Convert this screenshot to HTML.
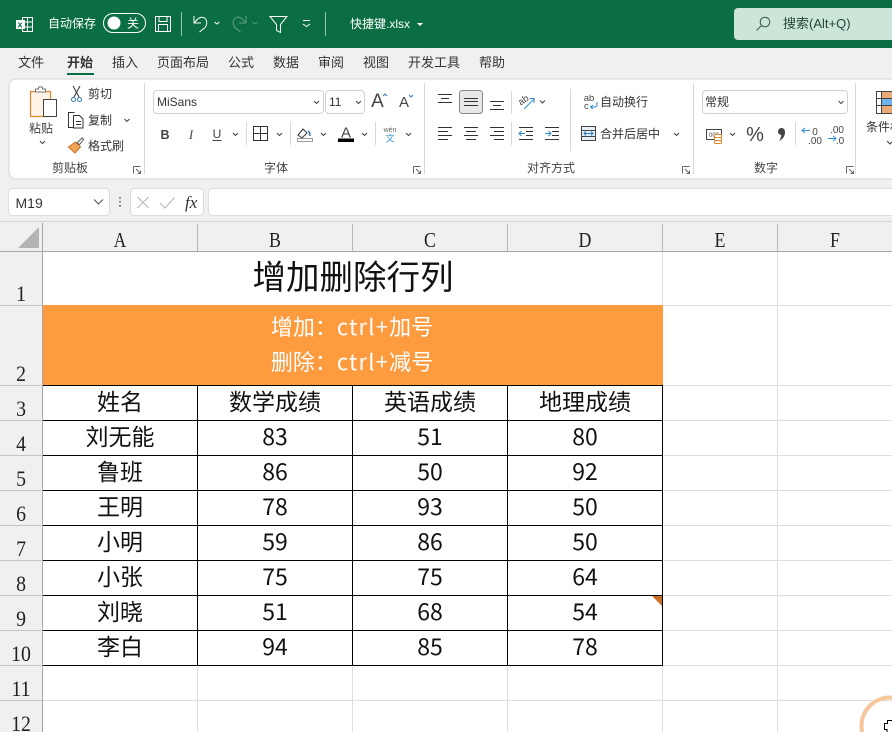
<!DOCTYPE html>
<html><head><meta charset="utf-8"><style>
html,body{margin:0;padding:0;background:#f0f0f0;width:892px;height:732px;overflow:hidden}
svg{display:block;font-family:"Liberation Sans","Noto Sans CJK SC",sans-serif}
.w{fill:#fff;font-size:12px}
.t{fill:#333;font-size:13px;text-anchor:middle}
.r{fill:#333;font-size:12px}
.g{fill:#444;font-size:12px;text-anchor:middle}
.h{font-family:"Liberation Serif","Noto Serif CJK SC",serif;font-size:21px;fill:#222;text-anchor:middle}
.n{font-size:22px}
.c{font-family:"Noto Sans CJK SC","Liberation Sans",sans-serif;font-size:23px;fill:#111;text-anchor:middle}
.o{font-family:"Noto Sans CJK SC","Liberation Sans",sans-serif;font-size:22px;fill:#fff;text-anchor:middle}
.i{fill:none;stroke:#333;stroke-width:1}
.l{fill:none;stroke:#fff;stroke-width:1}
.b{fill:none;stroke:#2f8fd0;stroke-width:1}
.ch{fill:none;stroke:#444;stroke-width:1}
</style></head><body>
<svg width="892" height="732" viewBox="0 0 892 732" xmlns="http://www.w3.org/2000/svg">
<rect width="892" height="48" fill="#0a6e42"/>
<rect y="48" width="892" height="140" fill="#f0f0f0"/>
<!-- title bar -->
<g><rect x="22.500" y="17.500" width="10" height="14" fill="none" stroke="#fff"/><path d="M22 22h11M22 27h11M27.500 17v14" class="l"/><rect x="16" y="20" width="9" height="9" fill="#fff"/><text x="17.500" y="27.500" font-size="9" font-weight="bold" fill="#0a6e42">x</text></g>
<text x="48" y="27.500" class="w">自动保存</text>
<rect x="103.500" y="13.500" width="42" height="19" rx="9.500" fill="none" stroke="#fff"/>
<circle cx="114" cy="23" r="6.500" fill="#fff"/>
<text x="127" y="27.500" class="w">关</text>
<path d="M155.500 16.500h15v15h-15zM159 16.500v5h8v-5M158.500 31.500v-7h9v7" class="l"/>
<path d="M181.500 12v24" stroke="#9dc4b0" fill="none"/>
<path d="M194 16v7h7M194.500 23c3-5 7-7 10-5 3 2 3 7 0 10l-5 4" class="l" stroke-width="1.300"/>
<path d="M214.500 22l2.500 2 2.500-2" class="l"/>
<path d="M246 16v7h-7M245.500 23c-3-5-7-7-10-5-3 2-3 7 0 10l5 4" fill="none" stroke="#4f9673" stroke-width="1.300"/>
<path d="M252.500 22l2.500 2 2.500-2" fill="none" stroke="#4f9673"/>
<path d="M270 16.500h17l-6.500 8v8l-4-2v-6z" class="l"/>
<path d="M303 20.500h7M303 24l3.500 2.500 3.500-2.500" class="l"/>
<path d="M325.500 12v24" stroke="#9dc4b0" fill="none"/>
<text x="350" y="28" class="w">快捷键.xlsx</text>
<path d="M417 23h6l-3 3z" fill="#fff"/>
<rect x="734" y="8" width="170" height="32" rx="4" fill="#cbe5d9"/>
<circle cx="765" cy="22" r="4.800" fill="none" stroke="#35584a"/><path d="M761.500 25.500l-5 5" stroke="#35584a" fill="none"/>
<text x="783" y="28" font-size="13" fill="#26463a">搜索(Alt+Q)</text>
<!-- tabs -->
<text class="t" x="31" y="67">文件</text>
<text class="t" x="80" y="67" font-weight="bold" fill="#111">开始</text>
<text class="t" x="125" y="67">插入</text>
<text class="t" x="183" y="67">页面布局</text>
<text class="t" x="241" y="67">公式</text>
<text class="t" x="286" y="67">数据</text>
<text class="t" x="331" y="67">审阅</text>
<text class="t" x="376" y="67">视图</text>
<text class="t" x="434" y="67">开发工具</text>
<text class="t" x="492" y="67">帮助</text>
<rect x="67" y="73" width="27" height="2" fill="#0a6e42"/>
<!-- ribbon panel -->
<rect x="9" y="79" width="900" height="100" rx="7" fill="#fff" stroke="#d4d4d4"/>
<path d="M144.500 83v91M424.500 83v91M570.500 89v62M693.500 83v91M855.500 83v91" stroke="#d8d8d8" fill="none"/>
<!-- clipboard -->
<rect x="30.500" y="91.500" width="20" height="25" fill="#fdf3e6" stroke="#e08a2e" stroke-width="1.300"/>
<path d="M35.500 92v-3h3v-2h4v2h3v3z" fill="#fff" stroke="#777"/>
<rect x="43.500" y="99.500" width="13" height="17" fill="#fff" stroke="#444"/>
<text x="41" y="132.500" class="g">粘贴</text>
<path d="M40 141l2.500 2.500 2.500-2.500" class="ch"/>
<path d="M73 86l6 11M80 86l-6 11" class="i"/><circle cx="73.500" cy="99.500" r="2" fill="none" stroke="#2f78b8"/><circle cx="79.500" cy="99.500" r="2" fill="none" stroke="#2f78b8"/>
<text x="88" y="98" class="r">剪切</text>
<path d="M73 127.500h-4.500v-15h6M73.500 115.500h6l3.500 3.500v9h-9.500zM76 121.500h5M76 124.500h5" class="i"/>
<text x="88" y="124.500" class="r">复制</text>
<path d="M124.500 119l2.500 2.500 2.500-2.500" class="ch"/>
<path d="M68.500 147l7-5 5 5-5.500 6z" fill="#f0a65a" stroke="#c9711d"/><path d="M77 143l5-5 1.500 1.500-4 5z" fill="#fff" stroke="#555"/>
<text x="88" y="150" class="r">格式刷</text>
<text x="70" y="172" class="g">剪贴板</text>
<path d="M133.500 166.500h7M133.500 166.500v7M136 169l4.500 4.500M140.500 170.500v3h-3" stroke="#666" fill="none"/>
<!-- font -->
<rect x="153.500" y="90.500" width="170" height="23" rx="3.500" fill="#fff" stroke="#d0d0d0"/>
<text x="157" y="106" font-size="12" fill="#333">MiSans</text>
<path d="M314 101l2.500 2.500 2.500-2.500" class="ch"/>
<rect x="325.500" y="90.500" width="39" height="23" rx="3.500" fill="#fff" stroke="#d0d0d0"/>
<text x="329" y="106" font-size="12" fill="#333">11</text>
<path d="M356 101l2.500 2.500 2.500-2.500" class="ch"/>
<text x="377.500" y="107" font-size="19" fill="#444" text-anchor="middle">A</text><path d="M383 96l2-2 2 2" fill="none" stroke="#2f78b8"/>
<text x="404" y="107" font-size="15" fill="#444" text-anchor="middle">A</text><path d="M409 95l2 2 2-2" fill="none" stroke="#2f78b8"/>
<text x="165" y="139" font-size="12.500" font-weight="bold" fill="#444" text-anchor="middle">B</text>
<text x="191" y="139" font-size="13" font-style="italic" font-family="Liberation Serif" fill="#444" text-anchor="middle">I</text>
<text x="217" y="138" font-size="12" fill="#444" text-anchor="middle">U</text><path d="M212.500 140.500h9" stroke="#444" fill="none"/>
<path d="M233 133l2.500 2.500 2.500-2.500" class="ch"/>
<path d="M246.500 122v23" stroke="#d8d8d8" fill="none"/>
<rect x="253.500" y="126.500" width="14" height="14" fill="none" stroke="#333"/><path d="M260.500 126.500v14M253.500 133.500h14" stroke="#333" fill="none"/>
<path d="M277 133l2.500 2.500 2.500-2.500" class="ch"/>
<path d="M290.500 122v23" stroke="#d8d8d8" fill="none"/>
<path d="M298 135l5-6 4 4-5 5z" class="i"/><path d="M308 131c2 1 2 3 2 5" stroke="#2f78b8" fill="none" stroke-width="1.500"/><rect x="297.500" y="138.500" width="15" height="3" fill="#fff" stroke="#999"/>
<path d="M321 133l2.500 2.500 2.500-2.500" class="ch"/>
<text x="346" y="137.500" font-size="15" fill="#444" text-anchor="middle">A</text><rect x="338" y="138.500" width="16" height="3.500" fill="#000"/>
<path d="M362 133l2.500 2.500 2.500-2.500" class="ch"/>
<path d="M375.500 122v23" stroke="#d8d8d8" fill="none"/>
<text x="390" y="132" font-size="7" fill="#666" text-anchor="middle">wén</text>
<text x="390" y="141.500" font-size="9" fill="#2f8fd0" text-anchor="middle">文</text>
<path d="M406 133l2.500 2.500 2.500-2.500" class="ch"/>
<text x="276" y="172" class="g">字体</text>
<path d="M413.500 166.500h7M413.500 166.500v7M416 169l4.500 4.500M420.500 170.500v3h-3" stroke="#666" fill="none"/>
<!-- align -->
<path d="M438 94.500h14M441 98.500h8M438 102.500h14" class="i"/>
<rect x="459.500" y="90.500" width="23" height="23" rx="3" fill="#e8e8e8" stroke="#888"/>
<path d="M464 98.500h14M464 101.500h14M464 105.500h14" class="i"/>
<path d="M490 101.500h14M493 105.500h8M490 109.500h14" class="i"/>
<path d="M511.500 91v23M511.500 122v23" stroke="#d8d8d8" fill="none"/>
<text x="524" y="103" font-size="9.500" fill="#444" text-anchor="middle" transform="rotate(-35 524 101)">ab</text>
<path d="M524 109l10-10M529.500 98.500h4.500v4.500" class="b"/>
<path d="M540 100.500l2.500 2.500 2.500-2.500" class="ch"/>
<path d="M438 127.500h14M438 131.500h10M438 135.500h14M438 139.500h10" class="i"/>
<path d="M464 127.500h14M466 131.500h10M464 135.500h14M466 139.500h10" class="i"/>
<path d="M490 127.500h14M494 131.500h10M490 135.500h14M494 139.500h10" class="i"/>
<path d="M519 127.500h14M526 131.500h7M526 135.500h7M519 139.500h14" class="i"/><path d="M525 133.500h-6M521.500 131l-2.500 2.500 2.500 2.500" class="b"/>
<path d="M545 127.500h14M552 131.500h7M552 135.500h7M545 139.500h14" class="i"/><path d="M545 133.500h6M548.500 131l2.500 2.500-2.500 2.500" class="b"/>
<text x="551" y="172" class="g">对齐方式</text>
<text x="589" y="101" font-size="9.500" fill="#444" text-anchor="middle">ab</text><text x="584" y="109" font-size="9.500" fill="#444">c</text>
<path d="M597 102v3c0 2-2 2-3 2h-4M593 105l-2.500 2 2.500 2" class="b"/>
<text x="600" y="106" class="r">自动换行</text>
<rect x="581.500" y="126.500" width="14" height="14" fill="#e3f0fa" stroke="#444"/><path d="M581.500 130.500h14M581.500 136.500h14" stroke="#444" fill="none"/><path d="M584 133.500h9M586 131.500l-2 2 2 2M591 131.500l2 2-2 2" fill="none" stroke="#2f78b8"/>
<text x="600" y="138" class="r">合并后居中</text>
<path d="M674 133l2.500 2.500 2.500-2.500" class="ch"/>
<path d="M682.500 166.500h7M682.500 166.500v7M685 169l4.500 4.500M689.500 170.500v3h-3" stroke="#666" fill="none"/>
<!-- number -->
<rect x="702.500" y="90.500" width="145" height="23" rx="3.500" fill="#fff" stroke="#d0d0d0"/>
<text x="705" y="106" class="r">常规</text>
<path d="M838.500 101l2.500 2.500 2.500-2.500" class="ch"/>
<rect x="706.500" y="129.500" width="15" height="10" fill="#fff" stroke="#444"/><text x="709" y="137" font-size="6" fill="#444">000</text>
<rect x="714.500" y="134.500" width="7" height="9" rx="1" fill="#fff" stroke="#e08a2e"/><path d="M714.500 137.500h7M714.500 140.500h7" stroke="#e08a2e" fill="none"/>
<path d="M730 133l2.500 2.500 2.500-2.500" class="ch"/>
<text x="755" y="141" font-size="20" fill="#444" text-anchor="middle">%</text>
<circle cx="781.500" cy="131.500" r="3.500" fill="#444"/><path d="M785 132c0 4-2 7-6 9 1.500-2 2.500-5 2.500-8z" fill="#444"/>
<path d="M795.500 122v23" stroke="#d8d8d8" fill="none"/>
<text x="815" y="135" font-size="10" fill="#444" text-anchor="middle">0</text><text x="815" y="144" font-size="10" fill="#444" text-anchor="middle">.00</text><path d="M802 130.500h8M805 128l-3 2.500 3 2.500" class="b"/>
<text x="837" y="133" font-size="10" fill="#444" text-anchor="middle">.00</text><text x="840" y="144" font-size="10" fill="#444" text-anchor="middle">.0</text><path d="M828 138.500h8M833 136l3 2.500-3 2.500" class="b"/>
<text x="766" y="172" class="g">数字</text>
<path d="M846.500 166.500h7M846.500 166.500v7M849 169l4.500 4.500M853.500 170.500v3h-3" stroke="#666" fill="none"/>
<rect x="876.500" y="91.500" width="22" height="22" fill="#fff" stroke="#444"/>
<rect x="882" y="92" width="10" height="6" fill="#e9a878"/><rect x="882" y="99" width="10" height="6" fill="#6fb1e8"/><rect x="882" y="106" width="10" height="7" fill="#e9a878"/>
<path d="M881.500 91.500v22M876.500 98.500h22M876.500 105.500h22" stroke="#444" fill="none"/>
<text x="866" y="131" class="r">条件格式</text>
<path d="M887 141l3 3 3-3" class="ch"/>
<!-- formula bar -->
<rect x="8.500" y="188.500" width="101" height="27" rx="4" fill="#fff" stroke="#dcdcdc"/>
<text x="15.500" y="208" font-size="14" fill="#333">M19</text>
<path d="M94 199.500l4.500 4.500 4.500-4.500" fill="none" stroke="#555" stroke-width="1.100"/>
<path d="M120 197v1.500M120 201v1.500M120 205v1.500" stroke="#777" stroke-width="2" fill="none"/>
<rect x="130.500" y="188.500" width="73" height="27" rx="4" fill="#fff" stroke="#dcdcdc"/>
<path d="M137.500 197l11 11M148.500 197l-11 11" stroke="#bbb" fill="none" stroke-width="1.200"/>
<path d="M160 203l5 5 9.500-10.500" stroke="#bbb" fill="none" stroke-width="1.200"/>
<text x="185" y="208" font-size="17" font-style="italic" font-family="Liberation Serif" fill="#333">fx</text>
<rect x="208.500" y="188.500" width="700" height="27" rx="4" fill="#fff" stroke="#dcdcdc"/>
<!-- sheet -->
<rect y="222" width="892" height="510" fill="#f0f0f0"/>
<rect y="221" width="892" height="1" fill="#d4d4d4"/>
<rect x="43" y="252" width="849" height="480" fill="#fff"/>
<path d="M39 227v21H18z" fill="#b4b4b4"/>
<!-- header lines -->
<path d="M42.500 223v509M0 251.500h892" stroke="#a6a6a6" fill="none" stroke-width="1"/>
<path d="M197.500 224v27M352.500 224v27M507.500 224v27M662.500 224v27M777.500 224v27" stroke="#b8b8b8" fill="none"/>
<path d="M0 305.500h42M0 385.500h42M0 420.500h42M0 455.500h42M0 490.500h42M0 525.500h42M0 560.500h42M0 595.500h42M0 630.500h42M0 665.500h42M0 700.500h42" stroke="#c4c4c4" fill="none"/>
<text class="h" transform="translate(120 247) scale(.82 1)">A</text><text class="h" transform="translate(275 247) scale(.85 1)">B</text><text class="h" transform="translate(430 247) scale(.85 1)">C</text><text class="h" transform="translate(585 247) scale(.85 1)">D</text><text class="h" transform="translate(720 247) scale(.85 1)">E</text><text class="h" transform="translate(835 247) scale(.85 1)">F</text>
<text class="h n" transform="translate(21 301) scale(.9 1)">1</text><text class="h n" transform="translate(21 381) scale(.9 1)">2</text><text class="h n" transform="translate(21 416) scale(.9 1)">3</text><text class="h n" transform="translate(21 451) scale(.9 1)">4</text><text class="h n" transform="translate(21 486) scale(.9 1)">5</text><text class="h n" transform="translate(21 521) scale(.9 1)">6</text><text class="h n" transform="translate(21 556) scale(.9 1)">7</text><text class="h n" transform="translate(21 591) scale(.9 1)">8</text><text class="h n" transform="translate(21 626) scale(.9 1)">9</text><text class="h n" transform="translate(21 661) scale(.9 1)">10</text><text class="h n" transform="translate(21 696) scale(.9 1)">11</text><text class="h n" transform="translate(21 731) scale(.9 1)">12</text>
<!-- gridlines -->
<path d="M662.500 252v480M777.500 252v480M43 305.500h849M43 665.500h849M43 700.500h849M663 385.500h229M663 420.500h229M663 455.500h229M663 490.500h229M663 525.500h229M663 560.500h229M663 595.500h229M663 630.500h229M197.500 665v67M352.500 665v67M507.500 665v67" stroke="#dedede" fill="none"/>
<!-- orange -->
<rect x="43" y="305" width="620" height="80" fill="#fe9b3f"/>
<!-- table border -->
<path d="M43 385.500h620M43 420.500h620M43 455.500h620M43 490.500h620M43 525.500h620M43 560.500h620M43 595.500h620M43 630.500h620M43 665.500h620M197.500 385v281M352.500 385v281M507.500 385v281M662.500 385v281" stroke="#000" fill="none"/>
<text x="353" y="289" font-family="Noto Sans CJK SC,sans-serif" font-size="33.500" fill="#111" text-anchor="middle">增加删除行列</text>
<text class="o" x="352" y="335">增加：<tspan letter-spacing="1.200">ctrl+</tspan>加号</text>
<text class="o" x="352" y="370">删除：<tspan letter-spacing="1.200">ctrl+</tspan>减号</text>
<text class="c" x="120" y="410">姓名</text><text class="c" x="275" y="410">数学成绩</text><text class="c" x="430" y="410">英语成绩</text><text class="c" x="585" y="410">地理成绩</text>
<text class="c" x="120" y="445">刘无能</text><text class="c" x="275" y="445">83</text><text class="c" x="430" y="445">51</text><text class="c" x="585" y="445">80</text>
<text class="c" x="120" y="480">鲁班</text><text class="c" x="275" y="480">86</text><text class="c" x="430" y="480">50</text><text class="c" x="585" y="480">92</text>
<text class="c" x="120" y="515">王明</text><text class="c" x="275" y="515">78</text><text class="c" x="430" y="515">93</text><text class="c" x="585" y="515">50</text>
<text class="c" x="120" y="550">小明</text><text class="c" x="275" y="550">59</text><text class="c" x="430" y="550">86</text><text class="c" x="585" y="550">50</text>
<text class="c" x="120" y="585">小张</text><text class="c" x="275" y="585">75</text><text class="c" x="430" y="585">75</text><text class="c" x="585" y="585">64</text>
<text class="c" x="120" y="620">刘晓</text><text class="c" x="275" y="620">51</text><text class="c" x="430" y="620">68</text><text class="c" x="585" y="620">54</text>
<text class="c" x="120" y="655">李白</text><text class="c" x="275" y="655">94</text><text class="c" x="430" y="655">85</text><text class="c" x="585" y="655">78</text>
<path d="M652 596h10v10z" fill="#c8702a"/>
<circle cx="890" cy="726" r="28.500" fill="none" stroke="#f6c79c" stroke-width="4"/>
<path d="M892 720.500h-4.500v3h-3v6h2.500v3" fill="#fff" stroke="#000"/>
</svg>
</body></html>
